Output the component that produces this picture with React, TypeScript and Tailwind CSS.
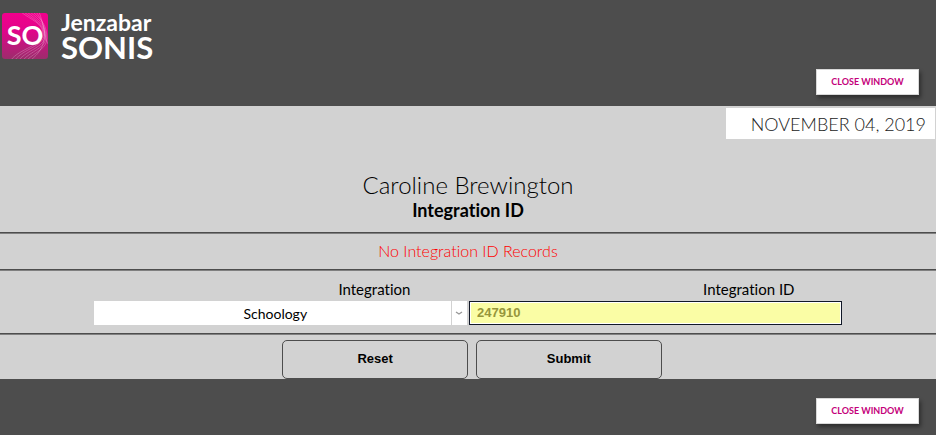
import type { ReactNode } from "react";

const STUDENT = "Caroline Brewington";

function SonisLogo() {
  return (
    <div className="flex items-start gap-3 pl-px text-white">
      <svg width="48" height="48" viewBox="0 0 48 48" aria-hidden="true">
        <defs>
          <linearGradient id="badge" x1="0" y1="0" x2="0" y2="1">
            <stop offset="0" stopColor="#f2008c" />
            <stop offset="0.4" stopColor="#e0058a" />
            <stop offset="1" stopColor="#9c2c6c" />
          </linearGradient>
          <clipPath id="badgeClip">
            <rect x="1" y="1" width="46" height="46" rx="3" />
          </clipPath>
        </defs>
        <rect x="1" y="1" width="46" height="46" rx="3" fill="url(#badge)" />
        <g
          clipPath="url(#badgeClip)"
          fill="none"
          stroke="#fff"
          strokeOpacity="0.4"
          strokeWidth="0.6"
        >
          <path d="M20 0C30 8 42 11 42 22S18 37 10 48" />
          <path d="M23 0C33 8 43 12 43 23S22 37 14 48" />
          <path d="M26 0C36 8 44 13 44 24S26 38 18 48" />
          <path d="M29 0C39 8 45 14 45 25S30 39 22 48" />
          <path d="M32 0C42 9 46 15 46 26S34 40 26 48" />
          <path d="M35 0C43 10 45 19 43 28S38 41 30 48" />
          <path d="M38 0C43 12 43 24 47 32" />
        </g>
        <text
          x="24"
          y="33"
          textAnchor="middle"
          fill="#fff"
          fontFamily="Lato, sans-serif"
          fontWeight="700"
          fontSize="27"
        >
          SO
        </text>
      </svg>
      <div className="font-[Lato,sans-serif] font-bold">
        <div className="text-[23px] leading-[20px]">
          Jenzabar
        </div>
        <div className="text-[31px] leading-[30px]">SONIS</div>
      </div>
    </div>
  );
}

function CloseButton() {
  return (
    <button
      type="button"
      className="h-[26px] w-[103px] border border-[#d9d9d9] bg-white text-[9px] font-bold text-[#c4007a] shadow-[2px_3px_4px_rgba(0,0,0,0.4)]"
    >
      CLOSE WINDOW
    </button>
  );
}

function ActionButton({ children }: { children: ReactNode }) {
  return (
    <button
      type="button"
      className="h-[39px] w-1/5 rounded-[5px] border border-[#4d4d4d] pb-[2px] font-[Liberation_Sans,Arial,sans-serif] text-[13px] font-bold"
    >
      {children}
    </button>
  );
}

function Rule() {
  return <hr className="h-[2px] border-t border-b border-t-[#4d4d4d] border-b-[#808080]" />;
}

export default function App() {
  return (
    <div className="bg-[#4d4d4d] font-[Century_Gothic,Lato,sans-serif] text-black [font-variant-ligatures:none]">
      <header className="flex h-[106px] items-start justify-between pt-[12px] pr-[17px]">
        <SonisLogo />
        <div className="self-end pb-[11px]">
          <CloseButton />
        </div>
      </header>

      <main className="bg-[#d2d2d2]">
        <div className="flex justify-end pt-[2px] pr-px">
          <div className="h-[31px] w-[209px] bg-white pr-[9px] text-right text-[18px] font-light leading-[33px] text-[#222]">
            NOVEMBER 04, 2019
          </div>
        </div>

        <div className="pt-[33px] pb-[9px] text-center">
          <h1 className="text-[24px] font-light leading-[26px]">{STUDENT}</h1>
          <h2 className="text-[18px] font-bold leading-[25px]">Integration ID</h2>
        </div>

        <Rule />
        <p className="pb-[2px] text-center text-[16px] leading-[33px] font-light text-[#f00]">
          No Integration ID Records
        </p>
        <Rule />

        <form>
          <div className="flex pt-[7px] pl-[20%] text-center text-[15px] leading-[22px]">
            <label htmlFor="integration" className="w-1/2">
              Integration
            </label>
            <label htmlFor="integrationId" className="w-1/2">
              Integration ID
            </label>
          </div>
          <div className="mx-[10%] flex h-[33px] gap-[2px] pt-px pb-[8px]">
            <div className="relative w-1/2">
              <select
                id="integration"
                defaultValue="Schoology"
                className="block h-[24px] w-full appearance-none bg-white pr-[10px] text-center text-[14px] [text-align-last:center]"
              >
                <option>Schoology</option>
              </select>
              <span className="pointer-events-none absolute top-0 right-0 flex h-[24px] w-[16px] items-center justify-center border-l border-[#d2d2d2]">
                <svg width="8" height="5" viewBox="0 0 8 5" fill="none" stroke="#999" strokeWidth="1.4">
                  <path d="M1 1l3 2 3-2" />
                </svg>
              </span>
            </div>
            <input
              id="integrationId"
              type="text"
              defaultValue="247910"
              className="h-[24px] w-1/2 border border-[#111827] bg-[#fafda5] px-[7px] pb-[2px] font-[Liberation_Sans,Arial,sans-serif] text-[13px] font-bold text-[#96963c] ring-1 ring-white ring-inset"
            />
          </div>
          <Rule />
          <div className="flex justify-center gap-2 pt-[5px] pl-2">
            <ActionButton>Reset</ActionButton>
            <ActionButton>Submit</ActionButton>
          </div>
        </form>
      </main>

      <footer className="flex justify-end pt-[19px] pr-[17px] pb-[11px]">
        <CloseButton />
      </footer>
    </div>
  );
}
